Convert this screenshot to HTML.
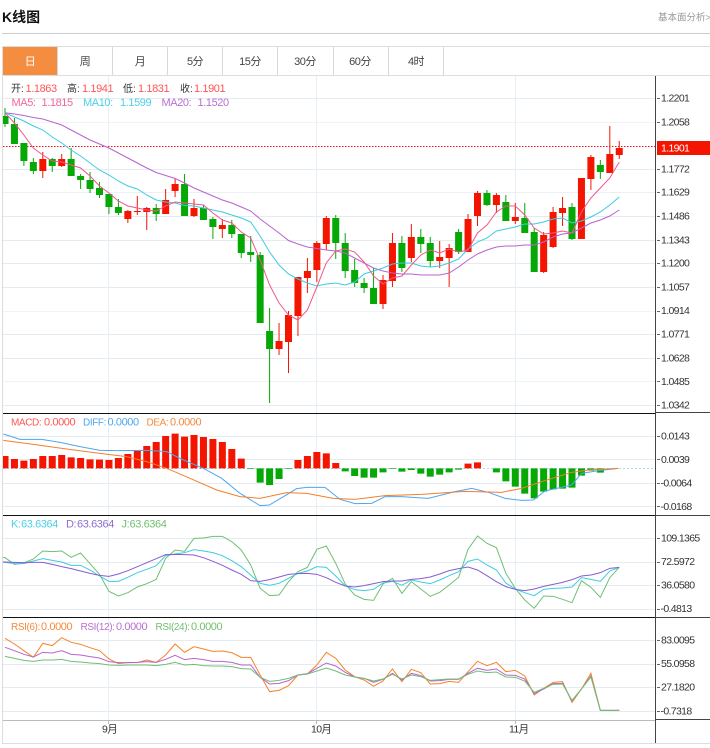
<!DOCTYPE html>
<html lang="zh"><head><meta charset="utf-8"><title>K线图</title>
<style>
html,body{margin:0;padding:0;background:#fff;width:710px;height:748px;overflow:hidden}
svg{display:block;font-family:"Liberation Sans","Noto Sans CJK SC",sans-serif}
.n *{vector-effect:non-scaling-stroke;fill:none}
.a{font-size:10.5px;letter-spacing:-.65px;fill:#333}
.l{font-size:11px;letter-spacing:-.4px}
.m{font-size:10px;letter-spacing:-.4px}
.c{font-size:10px;fill:#333}
.t{font-size:11px;letter-spacing:-.5px;fill:#444;text-anchor:middle}
</style></head><body>
<svg width="710" height="748" viewBox="0 0 710 748" xmlns="http://www.w3.org/2000/svg">
<defs><clipPath id="p"><rect x="3" y="76" width="652" height="644"/></clipPath></defs>
<rect width="710" height="748" fill="#fff"/>

<!-- header -->
<text x="2" y="22" font-size="14" font-weight="700" fill="#111">K线图</text>
<text x="658" y="20.5" font-size="9.5" fill="#999">基本面分析&gt;</text>
<rect x="2" y="33" width="708" height="1" fill="#ccc"/>

<!-- tabs -->
<rect x="2" y="46" width="708" height="1" fill="#ddd"/>
<rect x="2" y="75" width="708" height="1" fill="#ddd"/>
<rect x="3" y="47" width="54" height="28" fill="#f58d41"/>
<g fill="#d8d8d8">
<rect x="57" y="47" width="1" height="28"/><rect x="112" y="47" width="1" height="28"/><rect x="167" y="47" width="1" height="28"/><rect x="222" y="47" width="1" height="28"/><rect x="277" y="47" width="1" height="28"/><rect x="333" y="47" width="1" height="28"/><rect x="388" y="47" width="1" height="28"/><rect x="443" y="47" width="1" height="28"/>
</g>
<text x="30" y="65" class="t" style="fill:#fff">日</text>
<text x="85" y="65" class="t">周</text>
<text x="140" y="65" class="t">月</text>
<text x="195" y="65" class="t">5分</text>
<text x="250" y="65" class="t">15分</text>
<text x="305" y="65" class="t">30分</text>
<text x="360" y="65" class="t">60分</text>
<text x="416" y="65" class="t">4时</text>

<!-- frame -->
<rect x="2" y="46" width="1" height="698" fill="#ddd"/>
<rect x="2" y="743" width="708" height="1" fill="#ddd"/>

<!-- grid -->
<g fill="#e4ecf1">
<rect x="3" y="98" width="652" height="1"/><rect x="3" y="169" width="652" height="1"/><rect x="3" y="192" width="652" height="1" fill="#eaf0f4"/><rect x="3" y="216" width="652" height="1"/><rect x="3" y="240" width="652" height="1"/><rect x="3" y="263" width="652" height="1"/><rect x="3" y="287" width="652" height="1"/><rect x="3" y="334" width="652" height="1"/><rect x="3" y="358" width="652" height="1"/><rect x="3" y="405" width="652" height="1"/>
<rect x="3" y="122" width="652" height="1" fill="#f0f4f7"/><rect x="3" y="311" width="652" height="1" fill="#f0f4f7"/><rect x="3" y="381" width="652" height="1" fill="#eef3f6"/>
<rect x="3" y="436" width="652" height="1"/><rect x="3" y="459" width="652" height="1"/><rect x="3" y="483" width="652" height="1"/><rect x="3" y="506" width="652" height="1"/>
<rect x="3" y="538" width="652" height="1"/><rect x="3" y="562" width="652" height="1"/><rect x="3" y="585" width="652" height="1"/><rect x="3" y="609" width="652" height="1"/>
<rect x="3" y="640" width="652" height="1"/><rect x="3" y="664" width="652" height="1"/><rect x="3" y="687" width="652" height="1"/><rect x="3" y="711" width="652" height="1"/>
</g>
<g fill="#e8f0f5">
<rect x="108" y="76" width="1" height="644"/><rect x="316" y="76" width="1" height="644"/><rect x="515" y="76" width="1" height="644"/>
</g>

<g clip-path="url(#p)">
<!-- price line -->
<path d="M3 146.5H655" stroke="#f01010" stroke-width="1" stroke-dasharray="1.5 1.5" fill="none"/>

<!-- candles -->
<g class="n" transform="translate(5 0) scale(9.45 1)">
<path stroke="#05a805" stroke-width="1" d="M0 108V127M1 118V144M2 143V166M3 158V174M5 158V172M7 148V176M8 174V189M9 172V193M10 182V198M11 194V214M12 199V215M16 204V221M19 174V216M21 205V220M22 217V239M24 220V238M25 234V258M26 236V262M27 252V323M28 308V403M35 215V259M36 233V278M37 259V287M38 278V293M39 268V304M42 236V272M44 229V253M45 237V267M48 229V254M51 190V206M53 195V221M55 203V233M56 228V272M60 203V240M63 160V179"/>
<path stroke="#05a805" stroke-width="7" d="M0 116V124M1 124V144M2 143V161M3 162V171M5 159V166M7 159V176M8 176V180M9 180V189M10 188V195M11 194V207M12 207V213M16 208V214M19 184V216M21 208V220M22 219V227M24 225V234M25 234V253M26 252V255M27 255V323M28 331V349M35 218V243M36 243V271M37 270V283M38 283V288M39 288V304M42 243V268M44 237V244M45 243V261M48 232V252M51 193V205M53 202V221M55 218V233M56 232V272M60 207V239M63 165V172"/>
<path stroke="#f41500" stroke-width="1" d="M4 152V178M6 154V167M13 210V223M14 196V215M15 207V230M17 189V214M18 179V197M20 199V217M23 219V238M29 323V355M30 311V373M31 277V336M32 258V293M33 241V282M34 216V250M40 275V309M41 233V287M43 224V262M46 241V268M47 244V287M49 214V252M50 191V226M52 193V213M54 203V224M57 232V273M58 207V248M59 197V226M61 178V239M62 155V190M64 126V173M65 141V159"/>
<path stroke="#f41500" stroke-width="7" d="M4 159V171M6 159V166M13 211V219M14 211V212M15 208V212M17 200V214M18 184V191M20 208V216M23 225V229M29 341V349M30 315V342M31 277V316M32 271V278M33 243V270M34 218V244M40 280V304M41 243V281M43 237V258M46 257V261M47 248V258M49 219V252M50 193V216M52 195V205M54 217V221M57 235V272M58 212V247M59 208V213M61 178V239M62 157V179M64 154V173M65 148V155"/>

<!-- MA -->
<polyline stroke="#b863cf" stroke-width="1" points="0,112.7 1,114 2,115.5 3,117.5 4,119 5,122 6,125 7,130 8,135 9,140 10,144 11,148 12,153 13,158 14,163 15,168 16,172.5 17,175.5 18,178.5 19,183 20,188 21,192 22,196 23,200 24,203 25,207 26,211 27,219 28,226 29,233 30,240.5 31,244 32,247 33,248.5 34,250 35,251 36,253 37,258 38,263 39,268 40,271 41,273 42,274 43,274 44,275 45,275 46,275 47,273 48,267 49,260 50,254 51,250 52,247 53,246 54,246 55,245 56,245 57,242 58,237 59,234 60,233 61,228 62,223 63,220 64,216 65,210"/>
<polyline stroke="#3ccce0" stroke-width="1" points="0,112.7 1,117 2,121 3,126 4,130 5,137 6,143 7,150 8,156 9,163 10,170 11,175 12,181 13,186 14,189 15,195 16,200 17,202 18,203 19,205.5 20,206 21,208 22,210 23,212 24,215 25,218 26,222 27,236 28,252 29,265 30,274 31,279 32,283 33,286 34,284 35,283 36,285 37,282 38,274 39,271 40,268 41,264 42,263 43,263 44,266 45,267 46,266 47,263 48,259 49,249 50,242 51,238 52,231 53,229 54,227 55,224 56,224 57,222 58,219 59,218 60,223 61,221 62,217 63,212 64,205 65,197"/>
<polyline stroke="#f0588c" stroke-width="1" points="0,112.7 1,123 2,135 3,148 4,155 5,161 6,162 7,165 8,168 9,176 10,186 11,193 12,201 13,206 14,208 15,210 16,211 17,206 18,202 19,203 20,204 21,205 22,213 23,220 24,223 25,232 26,238 27,260 28,285 29,303 30,315 31,320 32,310 33,287 34,263 35,251 36,249 37,252 38,262 39,276 40,284 41,278 42,276 43,265 44,255 45,250 46,253 47,249 48,252 49,250 50,233 51,225 52,212 53,206 54,206 55,215 56,228 57,234 58,233 59,231 60,233 61,212 62,198 63,188 64,178 65,162"/>
</g>

<!-- MACD -->
<path d="M3 468.5H655" stroke="#a8dcf5" stroke-width="1" stroke-dasharray="2 2" fill="none"/>
<g class="n" transform="translate(5 410) scale(9.45 .33333)">
<path stroke="#f41500" stroke-width="7" d="M0 175V138M1 175V147M2 175V152M3 175V147M4 175V138M5 175V138M6 175V135M7 175V142M8 175V144M9 175V148M10 175V149M11 175V150M12 175V144M13 175V132M14 175V122M15 175V108M16 175V96M17 175V78M18 175V71M19 175V80M20 175V75M21 175V81M22 175V87M23 175V96M24 175V117M25 175V146M31 175V150M32 175V138M33 175V126M34 175V130M35 175V159M49 175V161M50 175V157"/>
<path stroke="#05a805" stroke-width="7" d="M26 175V177M27 175V218M28 175V225M29 175V207M30 175V177M36 175V184M37 175V198M38 175V203M39 175V203M40 175V187M41 175V177M42 175V185M43 175V180M44 175V191M45 175V200M46 175V194M47 175V187M48 175V179M52 175V187M53 175V214M54 175V230M55 175V251M56 175V265M57 175V245M58 175V238M59 175V236M60 175V233M61 175V197M62 175V182M63 175V188"/>
</g>
<g class="n" transform="translate(0 410) scale(.33333 .33333)">
<polyline stroke="#4ea6f0" stroke-width="1" points="10,72 60,88 125,88 180,97 240,110 300,121 350,122 440,121 500,125 550,150 610,175 665,205 720,250 780,287 808,285 850,260 890,236 920,232 975,232 1020,268 1065,281 1115,280 1155,260 1205,260 1285,265 1365,245 1415,235 1465,247 1515,265 1565,271 1600,270 1635,243 1715,225 1745,190 1795,182 1855,175"/>
<polyline stroke="#f57f2a" stroke-width="1" points="10,91 100,103 200,117 300,130 380,140 440,155 500,175 570,205 650,240 720,260 780,265 860,248 920,250 1000,265 1065,268 1155,257 1265,253 1395,244 1505,247 1565,235 1625,215 1715,187 1765,180 1855,175"/>
</g>

<!-- KDJ -->
<g class="n" transform="translate(5 515) scale(9.45 .33333)">
<polyline stroke="#6fbf73" stroke-width="1" points="-.2,128 0,128 1,148 2,144 3,132 4,108 5,110 6,108 7,127 8,114 9,146 10,178 11,229 12,243 13,233 14,216 15,206 16,193 17,130 18,105 19,109 20,70 21,69 22,64 23,64 24,80 25,105 26,150 27,220 28,242 29,240 30,200 31,170 32,157 33,103 34,93 35,145 36,207 37,240 38,253 39,256 40,207 41,190 42,235 43,200 44,222 45,244 46,232 47,210 48,187 49,103 50,63 51,85 52,98 53,175 54,220 55,255 56,280 57,243 58,244 59,253 60,263 61,197 62,217 63,247 64,188 65,157"/>
<polyline stroke="#3ccce0" stroke-width="1" points="-.2,142 0,142 1,146 2,146 3,138 4,131 5,136 6,141 7,151 8,151 9,165 10,183 11,199 12,199 13,187 14,173 15,163 16,152 17,122 18,117 19,113 20,104 21,108 22,113 23,122 24,137 25,155 26,180 27,205 28,211 29,205 30,190 31,175 32,168 33,155 34,157 35,183 36,212 37,224 38,227 39,223 40,204 41,199 42,211 43,195 44,201 45,206 46,195 47,182 48,170 49,139 50,132 51,150 52,165 53,204 54,222 55,233 56,242 57,223 58,220 59,219 60,216 61,188 62,193 63,199 64,168 65,157"/>
<polyline stroke="#8a5cd0" stroke-width="1" points="-.2,141 0,141 1,142 2,143 3,142 4,142 5,148 6,155 7,161 8,168 9,175 10,181 11,184 12,177 13,167 14,155 15,143 16,131 17,119 18,118 19,119 20,120 21,128 22,139 23,151 24,165 25,178 26,197 27,199 28,194 29,186 30,178 31,176 32,175 33,178 34,188 35,202 36,213 37,216 38,212 39,206 40,200 41,198 42,198 43,193 44,191 45,186 46,177 47,167 48,161 49,156 50,165 51,182 52,200 53,215 54,223 55,227 56,222 57,214 58,208 59,202 60,194 61,183 62,180 63,173 64,160 65,157"/>
</g>

<!-- RSI -->
<g class="n" transform="translate(5 615) scale(9.45 .33333)">
<polyline stroke="#f5832a" stroke-width="1" points="0,70 1,87 2,107 3,127 4,85 5,92 6,68 7,82 8,88 9,98 10,107 11,132 12,146 13,143 14,143 15,135 16,142 17,120 18,87 19,112 20,95 21,102 22,109 23,108 24,113 25,127 26,127 27,180 28,230 29,226 30,212 31,180 32,177 33,150 34,112 35,130 36,165 37,185 38,195 39,214 40,198 41,162 42,200 43,163 44,173 45,207 46,206 47,199 48,202 49,170 50,139 51,152 52,142 53,170 54,166 55,183 56,240 57,220 58,202 59,200 60,262 61,222 62,175 63,286 64,286 65,286"/>
<polyline stroke="#b863cf" stroke-width="1" points="0,97 1,107 2,118 3,126 4,112 5,114 6,107 7,118 8,120 9,125 10,129 11,140 12,143 13,143 14,142 15,140 16,142 17,133 18,121 19,134 20,130 21,134 22,139 23,139 24,142 25,150 26,150 27,187 28,207 29,205 30,197 31,180 32,176 33,160 34,144 35,153 36,172 37,186 38,190 39,202 40,193 41,175 42,195 43,175 44,182 45,198 46,197 47,193 48,193 49,175 50,160 51,166 52,162 53,180 54,181 55,192 56,236 57,222 58,206 59,205 60,258 61,222 62,183 63,286 64,286 65,286"/>
<polyline stroke="#6fbf73" stroke-width="1" points="0,124 1,130 2,136 3,139 4,135 5,135 6,133 7,139 8,141 9,144 10,146 11,150 12,151 13,150 14,150 15,150 16,152 17,148 18,142 19,150 20,148 21,152 22,153 23,153 24,155 25,161 26,162 27,187 28,199 29,196 30,190 31,180 32,177 33,168 34,159 35,168 36,180 37,186 38,190 39,198 40,192 41,178 42,192 43,180 44,185 45,196 46,194 47,192 48,192 49,178 50,168 51,173 52,171 53,186 54,187 55,198 56,232 57,220 58,208 59,207 60,256 61,222 62,186 63,286 64,286 65,286"/>
</g>
</g>

<!-- dividers -->
<g fill="#111">
<rect x="3" y="413" width="652" height="1"/><rect x="3" y="515" width="652" height="1"/><rect x="3" y="617" width="652" height="1"/>
</g>
<rect x="3" y="720" width="652" height="1" fill="#bbb"/>
<g fill="#444">
<rect x="655" y="76" width="1" height="667"/>
<rect x="655" y="412" width="55" height="1"/><rect x="655" y="515" width="55" height="1"/><rect x="655" y="617" width="55" height="1"/><rect x="655" y="719" width="55" height="1"/>
</g>

<!-- axis ticks -->
<path stroke="#666" stroke-width="1" fill="none" d="M657 98.5h3M657 122.5h3M657 169.5h3M657 192.5h3M657 216.5h3M657 240.5h3M657 263.5h3M657 287.5h3M657 311.5h3M657 334.5h3M657 358.5h3M657 381.5h3M657 405.5h3M657 436.5h3M657 459.5h3M657 483.5h3M657 506.5h3M657 538.5h3M657 562.5h3M657 585.5h3M657 609.5h3M657 640.5h3M657 664.5h3M657 687.5h3M657 711.5h3"/>
<path stroke="#bbb" stroke-width="1" fill="none" d="M108.5 720v4M316.5 720v4M515.5 720v4"/>

<!-- price tag -->
<rect x="657" y="141" width="53" height="14" fill="#f41500"/>
<text x="661" y="151.5" class="a" style="fill:#fff">1.1901</text>

<!-- axis labels -->
<g class="a">
<text x="661" y="101.5">1.2201</text><text x="661" y="125.5">1.2058</text><text x="661" y="172.5">1.1772</text><text x="661" y="195.5">1.1629</text><text x="661" y="219.5">1.1486</text><text x="661" y="243.5">1.1343</text><text x="661" y="266.5">1.1200</text><text x="661" y="290.5">1.1057</text><text x="661" y="314">1.0914</text><text x="661" y="337.5">1.0771</text><text x="661" y="361.5">1.0628</text><text x="661" y="385">1.0485</text><text x="661" y="408.5">1.0342</text>
<text x="661" y="439.5">0.0143</text><text x="661" y="463">0.0039</text><text x="660.5" y="486.5">-0.0064</text><text x="660.5" y="510">-0.0168</text>
<text x="661" y="541.5">109.1365</text><text x="661" y="565">72.5972</text><text x="661" y="588.5">36.0580</text><text x="660.5" y="612">-0.4813</text>
<text x="661" y="643.5">83.0095</text><text x="661" y="667">55.0958</text><text x="661" y="690.5">27.1820</text><text x="660.5" y="714.5">-0.7318</text>
</g>

<!-- x axis -->
<g class="a">
<text x="102" y="732.5">9月</text><text x="311" y="732.5">10月</text><text x="509" y="732.5">11月</text>
</g>

<!-- legends -->
<text x="11" y="92" class="c">开:</text><text x="25.5" y="92" class="l" fill="#f55">1.1863</text>
<text x="67" y="92" class="c">高:</text><text x="82" y="92" class="l" fill="#f55">1.1941</text>
<text x="123" y="92" class="c">低:</text><text x="138" y="92" class="l" fill="#f55">1.1831</text>
<text x="180" y="92" class="c">收:</text><text x="194" y="92" class="l" fill="#f55">1.1901</text>

<text x="11.5" y="106" class="l" fill="#f0689a">MA5:</text><text x="41.5" y="106" class="l" fill="#f0689a">1.1815</text>
<text x="83" y="106" class="l" fill="#4cd0e6">MA10:</text><text x="120" y="106" class="l" fill="#4cd0e6">1.1599</text>
<text x="161.5" y="106" class="l" fill="#b870d0">MA20:</text><text x="197.5" y="106" class="l" fill="#b870d0">1.1520</text>

<text x="11" y="425.5" class="m" fill="#f55">MACD:</text><text x="44" y="425.5" class="l" fill="#f55">0.0000</text>
<text x="83" y="425.5" class="m" fill="#4ea6f0">DIFF:</text><text x="107.5" y="425.5" class="l" fill="#4ea6f0">0.0000</text>
<text x="146.5" y="425.5" class="m" fill="#f58a3c">DEA:</text><text x="170" y="425.5" class="l" fill="#f58a3c">0.0000</text>

<text x="11" y="527.5" class="l" fill="#4cd0e6">K:</text><text x="21" y="527.5" class="l" fill="#4cd0e6">63.6364</text>
<text x="66" y="527.5" class="l" fill="#8a6fd0">D:</text><text x="77" y="527.5" class="l" fill="#8a6fd0">63.6364</text>
<text x="121.5" y="527.5" class="l" fill="#70c070">J:</text><text x="129.5" y="527.5" class="l" fill="#70c070">63.6364</text>

<text x="11" y="630" class="m" fill="#f58a3c">RSI(6):</text><text x="41" y="630" class="l" fill="#f58a3c">0.0000</text>
<text x="80.5" y="630" class="m" fill="#b870d0">RSI(12):</text><text x="116" y="630" class="l" fill="#b870d0">0.0000</text>
<text x="155.5" y="630" class="m" fill="#70c070">RSI(24):</text><text x="191" y="630" class="l" fill="#70c070">0.0000</text>
</svg>
</body></html>
